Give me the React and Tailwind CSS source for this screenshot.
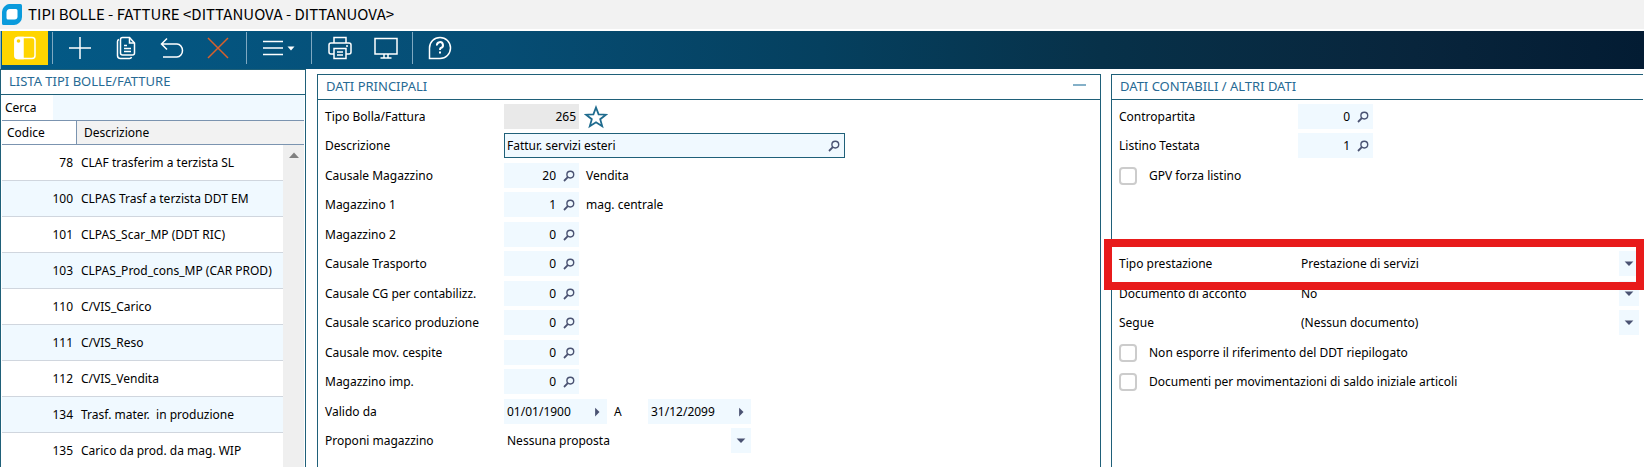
import { useState } from 'react';

const righe = [
  { codice: 78, descrizione: 'CLAF trasferim a terzista SL' },
  { codice: 100, descrizione: 'CLPAS Trasf a terzista DDT EM' },
  { codice: 101, descrizione: 'CLPAS_Scar_MP (DDT RIC)' },
  { codice: 103, descrizione: 'CLPAS_Prod_cons_MP (CAR PROD)' },
  { codice: 110, descrizione: 'C/VIS_Carico' },
  { codice: 111, descrizione: 'C/VIS_Reso' },
  { codice: 112, descrizione: 'C/VIS_Vendita' },
  { codice: 134, descrizione: 'Trasf. mater.  in produzione' },
  { codice: 135, descrizione: 'Carico da prod. da mag. WIP' },
];

const campiCodice = [
  { id: 'causale-magazzino', label: 'Causale Magazzino', valore: '20', nota: 'Vendita' },
  { id: 'magazzino-1', label: 'Magazzino 1', valore: '1', nota: 'mag. centrale' },
  { id: 'magazzino-2', label: 'Magazzino 2', valore: '0' },
  { id: 'causale-trasporto', label: 'Causale Trasporto', valore: '0' },
  { id: 'causale-cg', label: 'Causale CG per contabilizz.', valore: '0' },
  { id: 'causale-scarico', label: 'Causale scarico produzione', valore: '0' },
  { id: 'causale-cespite', label: 'Causale mov. cespite', valore: '0' },
  { id: 'magazzino-imp', label: 'Magazzino imp.', valore: '0' },
];

function Lente() {
  return (
    <svg width="12" height="12" viewBox="0 0 12 12" fill="none" stroke="#4a5272" strokeWidth="1.4">
      <circle cx="7.3" cy="4.6" r="3.4" />
      <path d="M4.8 7.2L1 11" strokeWidth="1.8" />
    </svg>
  );
}

function Freccia({ destra }) {
  return (
    <svg width="10" height="10" viewBox="0 0 8 8" fill="#4a5272">
      {destra ? <path d="M2.5 0.5L6 4L2.5 7.5Z" /> : <path d="M0.5 2H7.5L4 5.5Z" />}
    </svg>
  );
}

function Riga({ id, label, children }) {
  return (
    <div className="flex h-[25px] items-center odd:mb-1 even:mb-[5px]">
      <label htmlFor={id} className="w-[179px] shrink-0 whitespace-nowrap">{label}</label>
      {children}
    </div>
  );
}

function CampoCodice({ id, valore, nome }) {
  return (
    <div className="flex h-full w-[75px] shrink-0 bg-[#f0f9ff]">
      <input id={id} defaultValue={valore} className="min-w-0 flex-1 pr-[3px] text-right outline-none" />
      <button type="button" aria-label={`Cerca ${nome}`} className="flex w-5 items-center justify-center">
        <Lente />
      </button>
    </div>
  );
}

function CampoData({ id, valore, nome }) {
  return (
    <div className="flex h-full w-[103px] bg-[#f0f9ff]">
      <input id={id} aria-label={nome} defaultValue={valore} className="min-w-0 flex-1 pl-[3px] outline-none" />
      <button type="button" aria-label={`Calendario ${nome}`} className="flex w-5 items-center justify-center">
        <Freccia destra />
      </button>
    </div>
  );
}

function Tendina({ id, valore }) {
  return (
    <div className="relative h-full max-w-full flex-1">
      <select id={id} className="h-full w-full appearance-none bg-transparent pl-[3px] outline-none">
        <option>{valore}</option>
      </select>
      <span className="pointer-events-none absolute inset-y-0 right-0 flex w-5 items-center justify-center bg-[#f0f9ff]">
        <Freccia />
      </span>
    </div>
  );
}

function Spunta({ label }) {
  return (
    <div className="flex h-[25px] items-center odd:mb-1 even:mb-[5px]">
      <label className="flex items-center gap-3 whitespace-nowrap">
        <input type="checkbox" className="size-[18px] appearance-none rounded-sm border-2 border-[#cccccc] bg-white" />
        {label}
      </label>
    </div>
  );
}

function Separatore() {
  return (
    <div className="flex w-[9px] shrink-0 justify-center">
      <span className="mt-px h-8 w-px bg-[#7fa9c2]" />
    </div>
  );
}

function Strumento({ nome, className, children }) {
  return (
    <button type="button" aria-label={nome} className={`flex h-[34px] items-center justify-center ${className || 'w-[46px]'}`}>
      {children}
    </button>
  );
}

function Barra() {
  const icona = { width: 24, height: 24, viewBox: '0 0 24 24', fill: 'none', stroke: '#fff', strokeWidth: 1.5 };

  return (
    <div className="flex h-[38px] border-l border-[#8fb5c9] bg-[linear-gradient(to_right,#035a87,#064d74_30%,#05405f_50%,#073149_67%,#08253c_86%,#031c33)] pl-px">
      <Strumento nome="Mostra lista" className="w-[46px] bg-[#ffd500]">
        <svg {...icona}>
          <rect x="2" y="1.5" width="20" height="21" rx="3" />
          <path d="M5 1.5H10V22.5H5A3 3 0 0 1 2 19.5V4.5A3 3 0 0 1 5 1.5Z" fill="#fff" />
          <circle cx="5.5" cy="5" r="1.8" fill="#ffd500" stroke="none" />
        </svg>
      </Strumento>
      <Separatore />
      <div className="flex pr-px">
        <Strumento nome="Nuovo">
          <svg {...icona}><path d="M12 1V23M1 12H23" /></svg>
        </Strumento>
        <Strumento nome="Duplica">
          <svg {...icona}>
            <path d="M8.5 1.5H15.5L20.5 7V17A2 2 0 0 1 18.5 19H8.5A2 2 0 0 1 6.5 17V3.5A2 2 0 0 1 8.5 1.5Z" />
            <path d="M15.5 1.5V7H20.5" />
            <path d="M5 3.5A2 2 0 0 0 3.5 5.5V19.5A3 3 0 0 0 6.5 22.5H15.5A2 2 0 0 0 17.5 21" />
            <path d="M10 9.5H13M10 12.5H17M10 15.5H17" />
          </svg>
        </Strumento>
        <Strumento nome="Annulla">
          <svg {...icona}>
            <path d="M7 2.5L1.5 8L7 13.5M1.5 8H17A5.5 6.5 0 0 1 17 21H3" />
          </svg>
        </Strumento>
        <Strumento nome="Elimina">
          <svg {...icona} stroke="#d9602b"><path d="M2 2L22 22M22 2L2 22" /></svg>
        </Strumento>
      </div>
      <Separatore />
      <Strumento nome="Menu" className="w-14 gap-1">
        <svg width="20" height="24" viewBox="0 0 20 24" stroke="#fff" strokeWidth="1.5">
          <path d="M0 5.5H20M0 12H20M0 18.5H20" />
        </svg>
        <svg width="8" height="8" viewBox="0 0 8 8" fill="#fff"><path d="M0.5 2.5H7.5L4 6.5Z" /></svg>
      </Strumento>
      <Separatore />
      <Strumento nome="Stampa" className="w-12">
        <svg {...icona}>
          <path d="M6 7V1.5H18V7M6 18H3A2 2 0 0 1 1 16V9A2 2 0 0 1 3 7H21A2 2 0 0 1 23 9V16A2 2 0 0 1 21 18H18" />
          <path d="M6 12.5H18V22.5H6ZM9 16H15M9 19H15M18 10H20" />
        </svg>
      </Strumento>
      <Strumento nome="Anteprima" className="w-11">
        <svg {...icona}><path d="M1 2.5H23V18H1ZM10 18V22M14 18V22M6.5 22H17.5" /></svg>
      </Strumento>
      <Separatore />
      <Strumento nome="Aiuto">
        <svg {...icona}>
          <path d="M1.5 22.5V12A10.5 10.5 0 1 1 12 22.5Z" />
          <path d="M9 9.5A3 3 0 1 1 12.8 12C12.2 12.3 12 12.8 12 14M12 15.5V17.5" strokeWidth="2" />
        </svg>
      </Strumento>
    </div>
  );
}

function Lista() {
  const [cerca, setCerca] = useState('');

  return (
    <aside className="mr-px border border-b-0 border-[#1f6079] px-px">
      <h2 className="-mx-px flex h-[25px] items-center border-b border-[#1f6079] pl-2 text-[13px] text-[#276a94]">
        LISTA TIPI BOLLE/FATTURE
      </h2>
      <div className="flex h-[25px] items-center">
        <label htmlFor="cerca" className="w-[51px] shrink-0 pl-[3px]">Cerca</label>
        <input
          id="cerca"
          value={cerca}
          onChange={(e) => setCerca(e.target.value)}
          className="h-full min-w-0 flex-1 bg-[#f0f9ff] outline-none"
        />
      </div>
      <table className="w-full table-fixed border-separate border-spacing-0 whitespace-pre">
        <colgroup>
          <col className="w-[74px]" />
          <col />
          <col className="w-[21px]" />
        </colgroup>
        <thead>
          <tr className="h-[25px] text-left">
            <th className="border-y border-[#7b94b0] p-0 pl-[5px] font-normal">Codice</th>
            <th colSpan={2} className="border-y border-l border-[#7b94b0] bg-[#f2f2f2] p-0 pl-[7px] font-normal">
              Descrizione
            </th>
          </tr>
        </thead>
        <tbody>
          {righe.map((r, i) => (
            <tr key={r.codice} className="group h-9">
              <td className="border-b border-[#d0d6de] p-0 pr-[3px] text-right group-even:bg-[#f0f9ff]">{r.codice}</td>
              <td className="border-b border-[#d0d6de] p-0 pl-[5px] group-even:bg-[#f0f9ff]">{r.descrizione}</td>
              {i === 0 && (
                <td rowSpan={righe.length} className="bg-[#efefef] p-0 align-top">
                  <button type="button" aria-label="Scorri in alto" className="flex h-5 w-full items-center justify-center">
                    <svg width="10" height="6" viewBox="0 0 10 6" fill="#808080"><path d="M0 6L5 0.5L10 6Z" /></svg>
                  </button>
                </td>
              )}
            </tr>
          ))}
        </tbody>
      </table>
    </aside>
  );
}

function DatiPrincipali() {
  const [aperto, setAperto] = useState(true);

  return (
    <section className="mt-[5px] border border-b-0 border-[#1f6079]">
      <div className="flex h-[25px] items-center justify-between border-b border-[#1f6079] pr-[14px] pl-2">
        <h2 className="text-[13px] text-[#276a94]">DATI PRINCIPALI</h2>
        <button type="button" aria-label="Riduci" onClick={() => setAperto(!aperto)} className="mb-1 flex h-3 items-center">
          <span className="h-0.5 w-[13px] bg-[#84b0c8]" />
        </button>
      </div>
      {aperto && (
        <div className="pt-1 pl-[7px]">
          <Riga id="tipo" label="Tipo Bolla/Fattura">
            <input id="tipo" defaultValue="265" readOnly className="h-full w-[75px] bg-[#e9e9e9] pr-[3px] text-right outline-none" />
            <button type="button" aria-label="Preferito" className="ml-[5px]">
              <svg width="24" height="24" viewBox="0 0 24 24" fill="none" stroke="#1f6b8e" strokeWidth="1.8">
                <path d="M12 2.5L14.6 9.4L22 9.7L16.2 14.2L18.2 21.3L12 17.3L5.8 21.3L7.8 14.2L2 9.7L9.4 9.4Z" />
              </svg>
            </button>
          </Riga>
          <Riga id="descrizione" label="Descrizione">
            <div className="flex h-full w-[341px] border border-[#1f6079] bg-[#f0f9ff]">
              <input id="descrizione" defaultValue="Fattur. servizi esteri" className="min-w-0 flex-1 pl-0.5 outline-none" />
              <button type="button" aria-label="Cerca descrizione" className="flex w-5 items-center justify-center">
                <Lente />
              </button>
            </div>
          </Riga>
          {campiCodice.map((c) => (
            <Riga key={c.id} id={c.id} label={c.label}>
              <CampoCodice id={c.id} valore={c.valore} nome={c.label} />
              {c.nota && <span className="ml-[7px]">{c.nota}</span>}
            </Riga>
          ))}
          <Riga id="valido-da" label="Valido da">
            <CampoData id="valido-da" valore="01/01/1900" nome="Valido da" />
            <label htmlFor="valido-a" className="w-[41px] pl-[7px]">A</label>
            <CampoData id="valido-a" valore="31/12/2099" nome="Valido a" />
          </Riga>
          <Riga id="proponi" label="Proponi magazzino">
            <div className="flex h-full w-[247px]">
              <Tendina id="proponi" valore="Nessuna proposta" />
            </div>
          </Riga>
        </div>
      )}
    </section>
  );
}

function DatiContabili() {
  return (
    <section className="mt-[5px] mr-px border-t border-l border-[#1f6079]">
      <h2 className="flex h-[25px] items-center border-b border-[#1f6079] pl-2 text-[13px] text-[#276a94]">
        DATI CONTABILI / ALTRI DATI
      </h2>
      <div className="pt-1 pr-1 pl-[7px]">
        <Riga id="contropartita" label="Contropartita">
          <CampoCodice id="contropartita" valore="0" nome="Contropartita" />
        </Riga>
        <Riga id="listino" label="Listino Testata">
          <CampoCodice id="listino" valore="1" nome="Listino Testata" />
        </Riga>
        <Spunta label="GPV forza listino" />
        <div className="mb-[5px] h-[25px]" />
        <div className="mb-1 h-[25px]" />
        <div className="relative mb-[5px]">
          <div className="flex h-[25px] items-center">
            <label htmlFor="prestazione" className="w-[179px] shrink-0">Tipo prestazione</label>
            <Tendina id="prestazione" valore="Prestazione di servizi" />
          </div>
          {/* Evidenziazione del campo */}
          <div className="pointer-events-none absolute -top-3 -right-[5px] -bottom-[14px] -left-[15px] z-10 border-8 border-[#e81b1b]" />
        </div>
        <Riga id="acconto" label="Documento di acconto">
          <Tendina id="acconto" valore="No" />
        </Riga>
        <Riga id="segue" label="Segue">
          <Tendina id="segue" valore="(Nessun documento)" />
        </Riga>
        <Spunta label="Non esporre il riferimento del DDT riepilogato" />
        <Spunta label="Documenti per movimentazioni di saldo iniziale articoli" />
      </div>
    </section>
  );
}

function App() {
  return (
    <div className="flex h-screen flex-col overflow-hidden bg-white font-['Noto_Sans',sans-serif] text-[12px] text-black">
      <header>
        <div className="flex h-[31px] items-center gap-1.5 border-b-2 border-white bg-[#f2f2f2] pl-0.5">
          <svg width="20" height="21" viewBox="0 0 20 21">
            <path d="M7 0H18.5Q20 0 20 1.5V13Q20 16 18 18L17 19Q15 21 12 21H1.5Q0 21 0 19.5V8Q0 5 2 3L3 2Q5 0 7 0Z" fill="#0a9bdc" />
            <path d="M8 5H14Q15.5 5 15.5 6.5V12.5Q15.5 15.5 12.5 15.5H6Q4.5 15.5 4.5 14V8.5Q4.5 5 8 5Z" fill="#fff" />
          </svg>
          <h1 className="font-['Noto_Sans_CJK_SC',sans-serif] text-[15px]">TIPI BOLLE - FATTURE &lt;DITTANUOVA - DITTANUOVA&gt;</h1>
        </div>
        <Barra />
      </header>
      <main className="grid min-h-0 flex-1 grid-cols-[307px_784fr_533fr] gap-2.5">
        <Lista />
        <DatiPrincipali />
        <DatiContabili />
      </main>
    </div>
  );
}

export default App;
